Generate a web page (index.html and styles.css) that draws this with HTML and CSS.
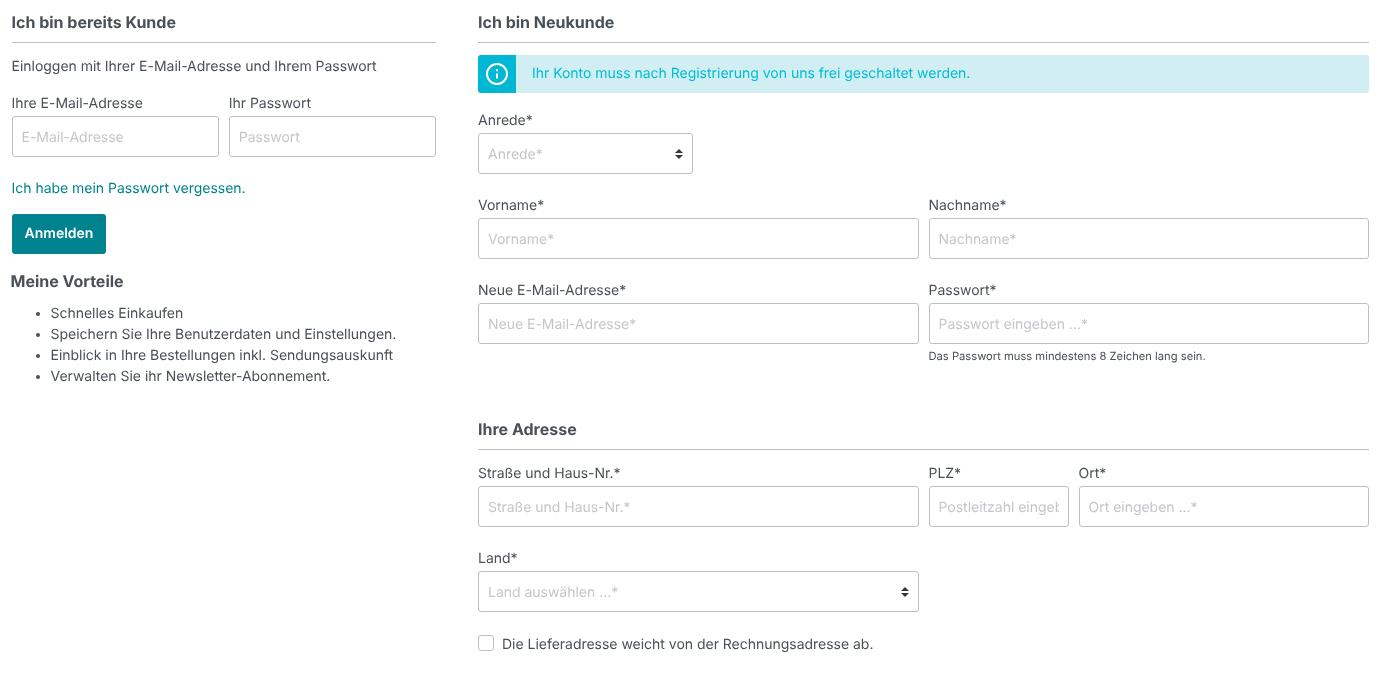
FILE: index.html
```html
<!DOCTYPE html>
<html lang="de">

<head>
    <meta charset="UTF-8">
    <meta name="viewport" content="width=device-width, initial-scale=1.0">
    <title>Anmelden</title>
    <link rel="stylesheet" href="styles.css">
</head>

<body>
    <div class="page">
        <section class="login-col">
            <h2 class="section-title">Ich bin bereits Kunde</h2>
            <p class="intro">Einloggen mit Ihrer E-Mail-Adresse und Ihrem Passwort</p>
            <div class="row login-row">
                <div class="field">
                    <label for="loginMail">Ihre E-Mail-Adresse</label>
                    <input type="text" id="loginMail" placeholder="E-Mail-Adresse">
                </div>
                <div class="field">
                    <label for="loginPass">Ihr Passwort</label>
                    <input type="password" id="loginPass" placeholder="Passwort">
                </div>
            </div>
            <a class="forgot" href="#">Ich habe mein Passwort vergessen.</a>
            <button class="btn-primary">Anmelden</button>
            <h3 class="benefits-title">Meine Vorteile</h3>
            <ul class="benefits">
                <li>Schnelles Einkaufen</li>
                <li>Speichern Sie Ihre Benutzerdaten und Einstellungen.</li>
                <li>Einblick in Ihre Bestellungen inkl. Sendungsauskunft</li>
                <li>Verwalten Sie ihr Newsletter-Abonnement.</li>
            </ul>
        </section>

        <section class="register-col">
            <h2 class="section-title">Ich bin Neukunde</h2>
            <div class="alert">
                <span class="alert-icon">
                    <svg width="22" height="22" viewBox="0 0 22 22" fill="none" stroke="#fff" stroke-width="2">
                        <circle cx="11" cy="11" r="10"></circle>
                        <path d="M11 10.5v5"></path>
                        <path d="M11 6.2v2"></path>
                    </svg>
                </span>
                <span class="alert-text">Ihr Konto muss nach Registrierung von uns frei geschaltet werden.</span>
            </div>

            <div class="row">
                <div class="field salutation">
                    <label for="anrede">Anrede*</label>
                    <div class="select-wrap">
                        <select id="anrede">
                            <option>Anrede*</option>
                        </select>
                        <svg class="select-arrows" width="8" height="10" viewBox="0 0 8 10" fill="#343a40">
                            <path d="M4 0l4 4H0z"></path>
                            <path d="M4 10L0 6h8z"></path>
                        </svg>
                    </div>
                </div>
            </div>

            <div class="row">
                <div class="field half">
                    <label for="vorname">Vorname*</label>
                    <input type="text" id="vorname" placeholder="Vorname*">
                </div>
                <div class="field half">
                    <label for="nachname">Nachname*</label>
                    <input type="text" id="nachname" placeholder="Nachname*">
                </div>
            </div>

            <div class="row">
                <div class="field half">
                    <label for="neueMail">Neue E-Mail-Adresse*</label>
                    <input type="text" id="neueMail" placeholder="Neue E-Mail-Adresse*">
                </div>
                <div class="field half">
                    <label for="passwort">Passwort*</label>
                    <input type="password" id="passwort" placeholder="Passwort eingeben ...*">
                    <small class="help">Das Passwort muss mindestens 8 Zeichen lang sein.</small>
                </div>
            </div>

            <h2 class="section-title address-title">Ihre Adresse</h2>

            <div class="row address-row">
                <div class="field half">
                    <label for="strasse">Straße und Haus-Nr.*</label>
                    <input type="text" id="strasse" placeholder="Straße und Haus-Nr.*">
                </div>
                <div class="half city-row">
                    <div class="field zip">
                        <label for="plz">PLZ*</label>
                        <input type="text" id="plz" placeholder="Postleitzahl eingeben ...*">
                    </div>
                    <div class="field city">
                        <label for="ort">Ort*</label>
                        <input type="text" id="ort" placeholder="Ort eingeben ...*">
                    </div>
                </div>
            </div>

            <div class="row">
                <div class="field half">
                    <label for="land">Land*</label>
                    <div class="select-wrap">
                        <select id="land">
                            <option>Land auswählen ...*</option>
                        </select>
                        <svg class="select-arrows" width="8" height="10" viewBox="0 0 8 10" fill="#343a40">
                            <path d="M4 0l4 4H0z"></path>
                            <path d="M4 10L0 6h8z"></path>
                        </svg>
                    </div>
                </div>
                <div class="half"></div>
            </div>

            <label class="check-row">
                <input type="checkbox">
                <span>Die Lieferadresse weicht von der Rechnungsadresse ab.</span>
            </label>
        </section>
    </div>
</body>

</html>
```

FILE: styles.css
```css
* {
    box-sizing: border-box;
}

html,
body {
    height: 679px;
    overflow: hidden;
}

body {
    margin: 0;
    font-family: Inter, "Liberation Sans", sans-serif;
    font-size: 14px;
    line-height: 21px;
    letter-spacing: -0.02px;
    color: #495057;
    background-color: #fff;
    text-rendering: geometricPrecision;
}

.page {
    display: flex;
    gap: 42px;
    padding: 12px 21px 0 11.5px;
    will-change: transform;
}

.login-col {
    flex: 0 0 424.5px;
}

.register-col {
    flex: 1;
    min-width: 0;
}

.section-title {
    margin: 0;
    padding-bottom: 10px;
    border-bottom: 1px solid #bcbfca;
    font-size: 16px;
    line-height: 20px;
    font-weight: 700;
    letter-spacing: 0;
}

.intro {
    margin: 12px 0 0;
    padding-top: 1px;
}

.row {
    display: flex;
    gap: 10px;
    margin-top: 16px;
}

.row + .row {
    margin-top: 20px;
}

.login-row {
    margin-top: 15px;
}

.login-row .field {
    flex: 1;
}

.field {
    min-width: 0;
}

.field label {
    display: block;
    padding-top: 1px;
    margin-bottom: 2px;
}

.half {
    flex: 1 1 0;
    min-width: 0;
}

.salutation {
    width: 215px;
}

input[type="text"],
input[type="password"],
select {
    display: block;
    width: 100%;
    height: 41px;
    padding: 2px 9px 0;
    border: 1px solid #bcbfca;
    border-radius: 3px;
    background-color: #fff;
    font-family: inherit;
    font-size: 14px;
    letter-spacing: -0.02px;
    color: #495057;
    text-rendering: geometricPrecision;
}

input::placeholder {
    color: #c4c6ca;
    opacity: 1;
}

select {
    appearance: none;
    color: #c4c6ca;
}

.select-wrap {
    position: relative;
}

.select-arrows {
    position: absolute;
    top: 16px;
    right: 10px;
}

.forgot {
    display: block;
    margin-top: 20px;
    padding-top: 1px;
    color: #00838f;
    text-decoration: none;
}

.btn-primary {
    display: block;
    width: 94px;
    height: 40px;
    margin-top: 15px;
    padding: 0 0 1px 1px;
    border: none;
    border-radius: 3px;
    background-color: #00838f;
    color: #fff;
    font-family: inherit;
    font-size: 14px;
    font-weight: 600;
    text-rendering: geometricPrecision;
}

.benefits-title {
    margin: 17px 0 0 -1px;
    font-size: 16px;
    line-height: 20px;
    font-weight: 700;
    letter-spacing: 0;
}

.benefits {
    margin: 12px 0 0;
    padding-left: 39px;
}

.alert {
    display: flex;
    align-items: center;
    height: 38px;
    margin-top: 12px;
    border-radius: 3px;
    overflow: hidden;
    background-color: #d1eff3;
    color: #00bcd4;
}

.alert-icon {
    display: flex;
    align-items: center;
    justify-content: center;
    flex: 0 0 38px;
    height: 38px;
    background-color: #00b8d4;
}

.alert-text {
    margin: 0 0 1px 16px;
}

.help {
    display: block;
    margin-top: 6px;
    font-size: 11.2px;
    line-height: 12px;
    letter-spacing: 0;
}

.address-title {
    margin-top: 57px;
}

.address-row {
    margin-top: 12px;
}

.city-row {
    display: flex;
    gap: 10px;
}

.zip {
    flex: 0 0 140px;
}

.city {
    flex: 1;
}

.check-row {
    display: flex;
    align-items: flex-start;
    gap: 8px;
    margin-top: 21px;
    padding-top: 1px;
}

.check-row input {
    appearance: none;
    width: 16px;
    height: 16px;
    margin: 1px 0 0;
    border: 1px solid #bcbfca;
    border-radius: 3px;
    background-color: #fff;
}
```
